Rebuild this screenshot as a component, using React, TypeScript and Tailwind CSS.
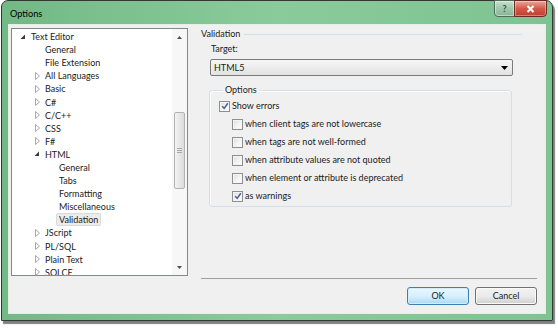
import React from 'react';

type TreeNode = {
  label: string;
  level: number;
  state?: 'open' | 'closed';
  selected?: boolean;
};

const tree: TreeNode[] = [
  { label: 'Text Editor', level: 0, state: 'open' },
  { label: 'General', level: 1 },
  { label: 'File Extension', level: 1 },
  { label: 'All Languages', level: 1, state: 'closed' },
  { label: 'Basic', level: 1, state: 'closed' },
  { label: 'C#', level: 1, state: 'closed' },
  { label: 'C/C++', level: 1, state: 'closed' },
  { label: 'CSS', level: 1, state: 'closed' },
  { label: 'F#', level: 1, state: 'closed' },
  { label: 'HTML', level: 1, state: 'open' },
  { label: 'General', level: 2 },
  { label: 'Tabs', level: 2 },
  { label: 'Formatting', level: 2 },
  { label: 'Miscellaneous', level: 2 },
  { label: 'Validation', level: 2, selected: true },
  { label: 'JScript', level: 1, state: 'closed' },
  { label: 'PL/SQL', level: 1, state: 'closed' },
  { label: 'Plain Text', level: 1, state: 'closed' },
  { label: 'SOLCE', level: 1, state: 'closed' },
];

const indent = ['pl-[7px]', 'pl-[21px]', 'pl-[35px]'];

const options = [
  { label: 'when client tags are not lowercase', checked: false },
  { label: 'when tags are not well-formed', checked: false },
  { label: 'when attribute values are not quoted', checked: false },
  { label: 'when element or attribute is deprecated', checked: false },
  { label: 'as warnings', checked: true },
];

const Expander = ({ state }: { state?: 'open' | 'closed' }) => {
  if (state === 'open') {
    return (
      <svg width="6" height="6" viewBox="0 0 6 6" className="ml-[1px]">
        <path d="M5 0.5 L5 5 L0.5 5 Z" fill="#3c3c3c" />
      </svg>
    );
  }
  if (state === 'closed') {
    return (
      <svg width="6" height="8" viewBox="0 0 6 8" className="ml-[2px]">
        <path d="M0.5 0.5 L4.5 4 L0.5 7.5 Z" fill="#fff" stroke="#a8a8a8" strokeWidth="1" />
      </svg>
    );
  }
  return null;
};

const CheckBox = ({ checked }: { checked: boolean }) => (
  <span className="flex h-[11px] w-[11px] items-center justify-center border border-[#8e8f8f] bg-gradient-to-br from-[#dcdcdc] via-[#f2f2f2] to-white shadow-[inset_0_0_0_1px_#f4f4f4]">
    {checked && (
      <svg width="8" height="8" viewBox="0 0 8 8">
        <path d="M1.2 4.2 L3.2 6.4 L6.8 1.2" fill="none" stroke="#4a5d96" strokeWidth="1.5" />
      </svg>
    )}
  </span>
);

const TreePanel = () => (
  <div className="flex h-[248px] w-[177px] overflow-hidden border border-[#828790] bg-white">
    <div className="flex-1 overflow-hidden pt-[1px]">
      {tree.map((node, i) => (
        <div key={i} className={`flex h-[13.1px] items-center ${indent[node.level]}`}>
          <span className="flex w-[12px] items-center">
            <Expander state={node.state} />
          </span>
          {node.selected ? (
            <span className="ml-[-3px] rounded-[2px] border border-[#d9d9d9] bg-[#ececec] px-[2px] leading-[11px]">
              {node.label}
            </span>
          ) : (
            <span className="leading-[11px]">{node.label}</span>
          )}
        </div>
      ))}
    </div>
    {/* scrollbar */}
    <div className="flex w-[15px] flex-col bg-[#f7f7f7]">
      <div className="flex h-[16px] items-center justify-center">
        <svg width="5" height="3" viewBox="0 0 5 3">
          <path d="M0 3 L2.5 0 L5 3 Z" fill="#4d4d4d" />
        </svg>
      </div>
      <div className="flex-1">
        <div className="mx-[2px] mt-[67px] flex h-[77px] items-center justify-center rounded-[2px] border border-[#b2b2b2] bg-gradient-to-r from-[#f2f2f2] to-[#dcdcdc]">
          <div className="flex flex-col gap-[1px]">
            <span className="h-px w-[5px] bg-[#a8a8a8]" />
            <span className="h-px w-[5px] bg-[#a8a8a8]" />
            <span className="h-px w-[5px] bg-[#a8a8a8]" />
          </div>
        </div>
      </div>
      <div className="flex h-[16px] items-center justify-center">
        <svg width="5" height="3" viewBox="0 0 5 3">
          <path d="M0 0 L2.5 3 L5 0 Z" fill="#4d4d4d" />
        </svg>
      </div>
    </div>
  </div>
);

const ValidationPanel = () => (
  <div className="ml-[13px] flex w-[336px] flex-col">
    <div className="flex h-[12px] items-center">
      <span className="leading-[12px]">Validation</span>
      <span className="ml-[4px] mr-[15px] h-px flex-1 bg-[#d5dfe5]" />
    </div>
    <div className="ml-[10px] mt-[3px] h-[12px] leading-[12px]">Target:</div>
    <div className="ml-[9px] mt-[4px] flex h-[17px] w-[303px] items-center justify-between rounded-[2px] border border-[#7a7a7a] bg-gradient-to-b from-[#f6f6f6] to-[#e2e2e2] pl-[3px] pr-[4px]">
      <span className="leading-[12px]">HTML5</span>
      <svg width="7" height="4" viewBox="0 0 7 4">
        <path d="M0 0 L3.5 4 L7 0 Z" fill="#000" />
      </svg>
    </div>
    <fieldset className="ml-[8px] mt-[8px] h-[123px] w-[303px] rounded-[3px] border border-[#d5dfe5] pl-[9px] pt-[1px] shadow-[inset_1px_1px_0_#fff]">
      <legend className="ml-[4px] px-[2px] leading-[12px]">Options</legend>
      <div className="flex h-[18px] items-center gap-[2px]">
        <CheckBox checked />
        <span className="leading-[12px]">Show errors</span>
      </div>
      {options.map((o) => (
        <div key={o.label} className="ml-[13px] flex h-[18px] items-center gap-[2px]">
          <CheckBox checked={o.checked} />
          <span className="leading-[12px]">{o.label}</span>
        </div>
      ))}
    </fieldset>
    <div className="mt-[71px] h-[2px] border-t border-[#a0a0a0] border-b-white" />
    <div className="mt-[7px] flex justify-end gap-[6px]">
      <button className="h-[18px] w-[62px] rounded-[3px] border border-[#3c7fb1] bg-gradient-to-b from-[#eaf6fd] via-[#d9f0fc] to-[#a7d9f5] leading-[12px] shadow-[inset_0_0_0_1px_#d3ecfa]">
        OK
      </button>
      <button className="h-[18px] w-[62px] rounded-[3px] border border-[#707070] bg-gradient-to-b from-[#f2f2f2] via-[#ebebeb] to-[#cfcfcf] leading-[12px] shadow-[inset_0_0_0_1px_#fafafa]">
        Cancel
      </button>
    </div>
  </div>
);

export default function App() {
  return (
    <div className="h-[328px] w-[558px] bg-white font-['Lato',sans-serif] text-[9px] text-[#1b1b1b]">
      <div className="ml-[1px] flex h-[321px] w-[552px] flex-col rounded-t-[7px] border border-[#2f3b32] bg-gradient-to-r from-[#72b986] via-[#8acb9b] to-[#7ec392] shadow-[2px_3px_1px_rgba(0,0,0,0.5)]">
        {/* title bar */}
        <div className="flex h-[23px] items-start">
          <span className="ml-[8px] mt-[7px] text-[9.2px] leading-[12px] text-black">Options</span>
          <div className="flex-1" />
          <div className="mr-[5px] mt-[-1px] flex">
            <div className="flex h-[17px] w-[21px] items-center justify-center rounded-bl-[4px] border border-[#4f6b57] bg-gradient-to-b from-[#c8e0cd] via-[#a2c7ac] to-[#86b694] shadow-[inset_0_0_0_1px_rgba(255,255,255,0.45)]">
              <span className="text-[9px] font-bold leading-[10px] text-[#34503c]">?</span>
            </div>
            <div className="ml-[-1px] flex h-[17px] w-[33px] items-center justify-center rounded-br-[4px] border border-[#6b2a22] bg-gradient-to-b from-[#e9a89a] via-[#d4594a] to-[#c23c2c] shadow-[inset_0_0_0_1px_rgba(255,255,255,0.35)]">
              <svg width="9" height="8" viewBox="0 0 9 8">
                <path d="M1.5 1 L7.5 7 M7.5 1 L1.5 7" stroke="#fff" strokeWidth="2" />
              </svg>
            </div>
          </div>
        </div>
        {/* client area */}
        <div className="mx-[6px] mb-[6px] flex flex-1 border border-[#e4efe6] bg-[#f0f0f0] pl-[2px] pt-[3px]">
          <TreePanel />
          <ValidationPanel />
        </div>
      </div>
    </div>
  );
}
